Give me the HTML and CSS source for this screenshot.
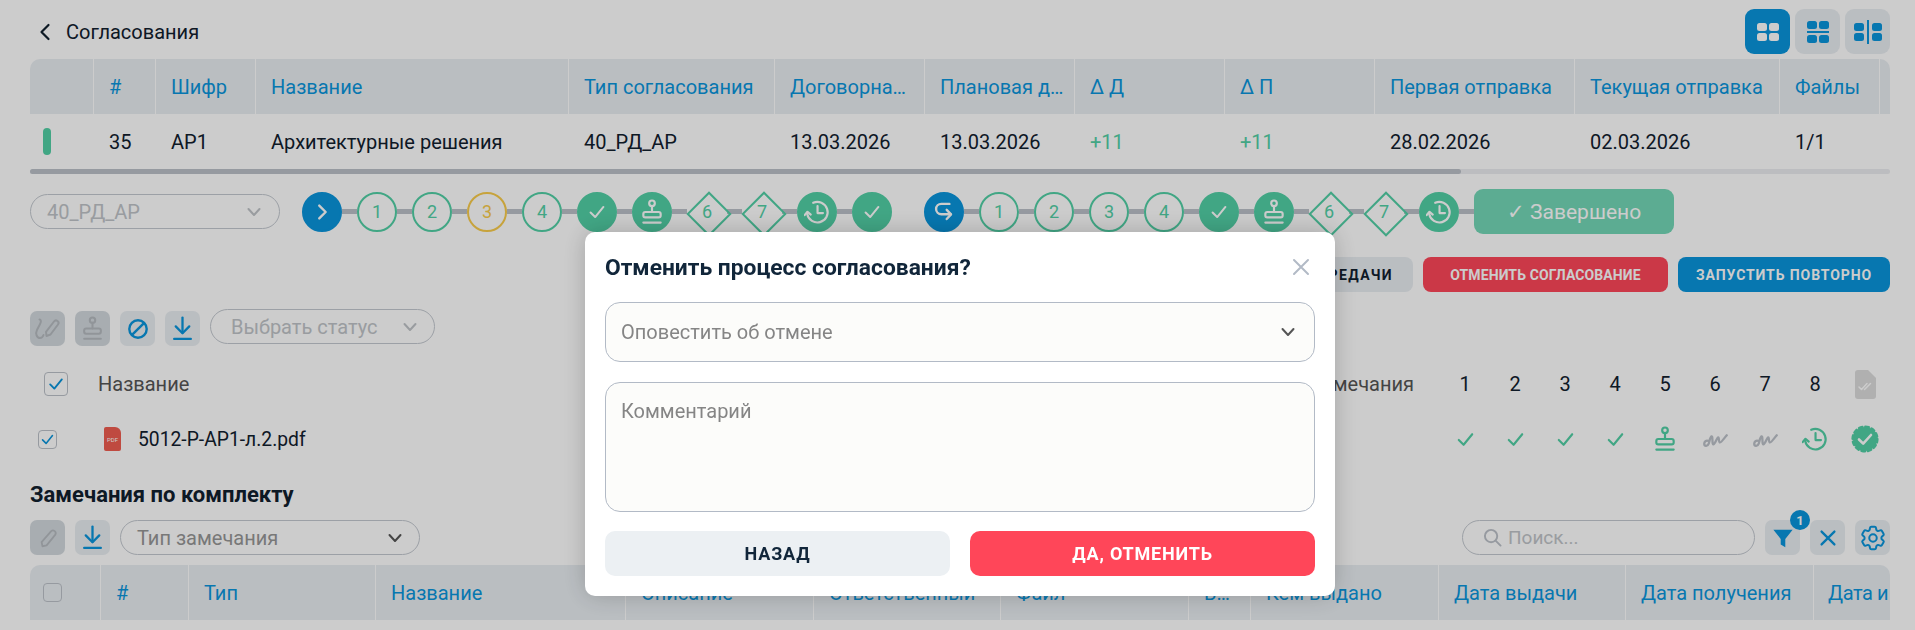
FILE: index.html
```html
<!DOCTYPE html>
<html lang="ru">
<head>
<meta charset="utf-8">
<title>Согласования</title>
<link rel="stylesheet" href="styles.css">
</head>
<body>
<svg class="sprite" aria-hidden="true">
  <symbol id="i-check" viewBox="0 0 24 24"><path d="M5 12.500l5 5 9-11" fill="none" stroke="currentColor" stroke-width="2.200" stroke-linecap="round" stroke-linejoin="round"/></symbol>
  <symbol id="i-stamp" viewBox="0 0 24 24"><g fill="none" stroke="currentColor" stroke-width="2" stroke-linecap="round" stroke-linejoin="round"><circle cx="12" cy="4" r="2.600"/><path d="M12 6.600v5.400"/><rect x="4" y="12" width="16" height="5" rx="1.800"/><path d="M4 21.800h16"/></g></symbol>
  <symbol id="i-history" viewBox="0 0 24 24"><g fill="none" stroke="currentColor" stroke-width="2" stroke-linecap="round" stroke-linejoin="round"><path d="M8.500 3.500A9.500 9.500 0 1 1 3 14"/><path d="M.6 14.800L3.200 11.800l3 2.600"/><path d="M12.500 6.500v6.500h5"/></g></symbol>
  <symbol id="i-back" viewBox="0 0 24 24"><g fill="none" stroke="currentColor" stroke-width="2.200" stroke-linecap="round" stroke-linejoin="round"><path d="M17 4.500H9.500a4.800 4.800 0 0 0 0 9.600H18"/><path d="M14.500 10l4 4.200-4 4.300"/></g></symbol>
  <symbol id="i-chev" viewBox="0 0 16 16"><path d="M2.500 5l5.500 6 5.500-6" fill="none" stroke="currentColor" stroke-width="2" stroke-linecap="round" stroke-linejoin="round"/></symbol>
  <symbol id="i-sign" viewBox="0 0 24 16"><path d="M5.500 9.500C3 8.500 1 10 1.200 12.500c.2 2.300 3.300 2.300 4.300-.5.800-2.300 1.300-6.500 2.700-7 1.200-.4.600 5.200 1.200 7 .5 1.400 1.600.5 3.200-3 1-2.300 1.900-3.700 2.400-2.500.5 1.300.1 3.800 1 4.300 1.300.7 3.800-3.500 6.800-6.800" fill="none" stroke="currentColor" stroke-width="2.200" stroke-linecap="round" stroke-linejoin="round"/></symbol>
  <symbol id="i-pencil" viewBox="0 0 24 24"><path d="M15.500 4.500a3 3 0 0 1 4.500 3.800L10.500 20 6 21l-1-4.500z" fill="none" stroke="currentColor" stroke-width="2" stroke-linejoin="round"/></symbol>
  <symbol id="i-signpen" viewBox="0 0 28 24"><g fill="none" stroke="currentColor" stroke-width="2" stroke-linecap="round" stroke-linejoin="round"><path d="M5.500 2.500C9 3 5 9 3 13c-2 4 0 8 3 8 2 0 3-1.500 3.500-3"/><path d="M20 4.500a2.500 2.500 0 0 1 4 3l-7.500 10-4 1.500-.5-4.200z"/></g></symbol>
  <symbol id="i-ban" viewBox="0 0 24 24"><g fill="none" stroke="currentColor" stroke-width="2.600"><circle cx="12" cy="12" r="9.500"/><path d="M5.500 18.500l13-13"/></g></symbol>
  <symbol id="i-down" viewBox="0 0 24 24"><g fill="none" stroke="currentColor" stroke-width="2.200" stroke-linecap="round" stroke-linejoin="round"><path d="M12 1.500V16"/><path d="M5.500 10l6.500 6.500 6.500-6.500"/><path d="M4 22h16"/></g></symbol>
  <symbol id="i-gear" viewBox="0 0 24 24"><g fill="none" stroke="currentColor" stroke-width="1.600"><path stroke-linejoin="round" d="M9.594 3.94c.09-.542.56-.94 1.11-.94h2.593c.55 0 1.02.398 1.11.94l.213 1.281c.063.374.313.686.645.87.074.04.147.083.22.127.325.196.72.257 1.075.124l1.217-.456a1.125 1.125 0 0 1 1.37.49l1.296 2.247a1.125 1.125 0 0 1-.26 1.431l-1.003.827c-.293.241-.438.613-.43.992a7.723 7.723 0 0 1 0 .255c-.008.378.137.75.43.991l1.004.827c.424.35.534.955.26 1.43l-1.298 2.247a1.125 1.125 0 0 1-1.369.491l-1.217-.456c-.355-.133-.75-.072-1.076.124a6.47 6.47 0 0 1-.22.128c-.331.183-.581.495-.644.869l-.213 1.281c-.09.543-.56.94-1.11.94h-2.594c-.55 0-1.019-.398-1.11-.94l-.213-1.281c-.062-.374-.312-.686-.644-.87a6.52 6.52 0 0 1-.22-.127c-.325-.196-.72-.257-1.076-.124l-1.217.456a1.125 1.125 0 0 1-1.369-.49l-1.297-2.247a1.125 1.125 0 0 1 .26-1.431l1.004-.827c.292-.24.437-.613.43-.991a6.932 6.932 0 0 1 0-.255c.007-.38-.138-.751-.43-.992l-1.004-.827a1.125 1.125 0 0 1-.26-1.43l1.297-2.247a1.125 1.125 0 0 1 1.37-.491l1.216.456c.356.133.751.072 1.076-.124.072-.044.146-.086.22-.128.332-.183.582-.495.644-.869l.214-1.28Z"/><circle cx="12" cy="12" r="3"/></g></symbol>
</svg>

<main class="page">
  <header class="topbar">
    <a class="back">
      <svg class="back-icon" viewBox="0 0 12 18"><path d="M9.500 2L2.500 9l7 7" fill="none" stroke="currentColor" stroke-width="2.200" stroke-linecap="round" stroke-linejoin="round"/></svg>
      <span>Согласования</span>
    </a>
    <div class="views">
      <button class="view view-on"><svg viewBox="0 0 24 24"><rect x="1" y="3" width="10" height="8" rx="2.500"/><rect x="13" y="3" width="10" height="8" rx="2.500"/><rect x="1" y="13" width="10" height="8" rx="2.500"/><rect x="13" y="13" width="10" height="8" rx="2.500"/></svg></button>
      <button class="view"><svg viewBox="0 0 24 24"><rect x="1" y="1" width="10" height="8" rx="2.500"/><rect x="13" y="1" width="10" height="8" rx="2.500"/><rect x="1" y="11" width="22" height="2"/><rect x="1" y="15" width="10" height="8" rx="2.500"/><rect x="13" y="15" width="10" height="8" rx="2.500"/></svg></button>
      <button class="view view-split"><svg viewBox="0 0 28 24"><rect x="0" y="3" width="10" height="8" rx="2.500"/><rect x="0" y="13" width="10" height="8" rx="2.500"/><rect x="13" y="0" width="2" height="24"/><rect x="18" y="3" width="10" height="8" rx="2.500"/><rect x="18" y="13" width="10" height="8" rx="2.500"/></svg></button>
    </div>
  </header>

  <section class="table table-one">
    <div class="thead">
      <div></div><div>#</div><div>Шифр</div><div>Название</div><div>Тип согласования</div><div>Договорна…</div><div>Плановая д…</div><div>Δ Д</div><div>Δ П</div><div>Первая отправка</div><div>Текущая отправка</div><div>Файлы</div><div></div>
    </div>
    <div class="trow">
      <div><span class="status-bar"></span></div><div>35</div><div>АР1</div><div>Архитектурные решения</div><div>40_РД_АР</div><div>13.03.2026</div><div>13.03.2026</div><div class="plus">+11</div><div class="plus">+11</div><div>28.02.2026</div><div>02.03.2026</div><div>1/1</div><div></div>
    </div>
    <div class="scrollbar"><div class="thumb"></div></div>
  </section>

  <section class="steps-row">
    <div class="pill pill-plan"><span>40_РД_АР</span><svg class="chev"><use href="#i-chev"/></svg></div>
    <div class="steps">
      <span class="node node-blue"><svg class="nicon" viewBox="0 0 24 24"><path d="M9 5l7 7-7 7" fill="none" stroke="currentColor" stroke-width="2.600" stroke-linecap="round" stroke-linejoin="round"/></svg></span><i class="link"></i>
      <span class="node">1</span><i class="link"></i>
      <span class="node">2</span><i class="link"></i>
      <span class="node node-yellow">3</span><i class="link"></i>
      <span class="node">4</span><i class="link"></i>
      <span class="node node-green"><svg class="nicon"><use href="#i-check"/></svg></span><i class="link"></i>
      <span class="node node-green"><svg class="nicon nicon-lg"><use href="#i-stamp"/></svg></span><i class="link"></i>
      <span class="node diamond"><b>6</b></span><i class="link"></i>
      <span class="node diamond"><b>7</b></span><i class="link"></i>
      <span class="node node-green"><svg class="nicon nicon-lg"><use href="#i-history"/></svg></span><i class="link"></i>
      <span class="node node-green"><svg class="nicon"><use href="#i-check"/></svg></span>
    </div>
    <div class="steps steps-second">
      <span class="node node-blue"><svg class="nicon nicon-lg"><use href="#i-back"/></svg></span><i class="link"></i>
      <span class="node">1</span><i class="link"></i>
      <span class="node">2</span><i class="link"></i>
      <span class="node">3</span><i class="link"></i>
      <span class="node">4</span><i class="link"></i>
      <span class="node node-green"><svg class="nicon"><use href="#i-check"/></svg></span><i class="link"></i>
      <span class="node node-green"><svg class="nicon nicon-lg"><use href="#i-stamp"/></svg></span><i class="link"></i>
      <span class="node diamond"><b>6</b></span><i class="link"></i>
      <span class="node diamond"><b>7</b></span><i class="link"></i>
      <span class="node node-green"><svg class="nicon nicon-lg"><use href="#i-history"/></svg></span><i class="link"></i>
    </div>
    <div class="done">✓ Завершено</div>
  </section>

  <section class="actions">
    <button class="act act-grey">ЛИСТ ПЕРЕДАЧИ</button>
    <button class="act act-red">ОТМЕНИТЬ СОГЛАСОВАНИЕ</button>
    <button class="act act-blue">ЗАПУСТИТЬ ПОВТОРНО</button>
  </section>

  <section class="tools tools-files">
    <button class="tool tool-off"><svg class="ticon ticon-wide"><use href="#i-signpen"/></svg></button>
    <button class="tool tool-off"><svg class="ticon ticon-tall"><use href="#i-stamp"/></svg></button>
    <button class="tool"><svg class="ticon"><use href="#i-ban"/></svg></button>
    <button class="tool"><svg class="ticon ticon-tall"><use href="#i-down"/></svg></button>
    <div class="pill pill-status"><span>Выбрать статус</span><svg class="chev"><use href="#i-chev"/></svg></div>
  </section>

  <section class="files">
    <div class="fhead">
      <span class="box box-lg"><svg viewBox="0 0 24 24"><use href="#i-check"/></svg></span>
      <span class="fname">Название</span>
      <span class="fremarks">Замечания</span>
      <div class="cells nums"><span>1</span><span>2</span><span>3</span><span>4</span><span>5</span><span>6</span><span>7</span><span>8</span>
        <span><svg class="doc" viewBox="0 0 21 29"><path d="M3 0h10l8 8v18a3 3 0 0 1-3 3H3a3 3 0 0 1-3-3V3a3 3 0 0 1 3-3z" fill="#dcdcdc"/><path d="M4 17l2.500 2.500L12 13.500M9.500 19.500l6-6" fill="none" stroke="#fff" stroke-width="1.500" stroke-linecap="round" stroke-linejoin="round"/></svg></span>
      </div>
    </div>
    <div class="frow">
      <span class="box box-sm"><svg viewBox="0 0 24 24"><use href="#i-check"/></svg></span>
      <span class="pdf">PDF</span>
      <span class="file-name">5012-Р-АР1-л.2.pdf</span>
      <div class="cells marks">
        <svg class="mk mk-ok"><use href="#i-check"/></svg>
        <svg class="mk mk-ok"><use href="#i-check"/></svg>
        <svg class="mk mk-ok"><use href="#i-check"/></svg>
        <svg class="mk mk-ok"><use href="#i-check"/></svg>
        <svg class="mk mk-stamp"><use href="#i-stamp"/></svg>
        <svg class="mk mk-sign"><use href="#i-sign"/></svg>
        <svg class="mk mk-sign"><use href="#i-sign"/></svg>
        <svg class="mk mk-stamp"><use href="#i-history"/></svg>
        <svg class="mk mk-badge" viewBox="0 0 28 28"><circle cx="14" cy="14" r="12" fill="currentColor"/><circle cx="14" cy="14" r="12.300" fill="none" stroke="currentColor" stroke-width="2.600" stroke-linecap="round" stroke-dasharray="3.400 3.040"/><path d="M8 14.500l4.200 4.200L20 10" fill="none" stroke="#fff" stroke-width="2.600" stroke-linecap="round" stroke-linejoin="round"/></svg>
      </div>
    </div>
  </section>

  <h2 class="section-title">Замечания по комплекту</h2>

  <section class="tools tools-notes">
    <button class="tool tool-off"><svg class="ticon"><use href="#i-pencil"/></svg></button>
    <button class="tool"><svg class="ticon ticon-tall"><use href="#i-down"/></svg></button>
    <div class="pill pill-type"><span>Тип замечания</span><svg class="chev"><use href="#i-chev"/></svg></div>
    <div class="push"></div>
    <div class="pill pill-search">
      <svg class="search" viewBox="0 0 20 20"><g fill="none" stroke="currentColor" stroke-width="2" stroke-linecap="round"><circle cx="8.500" cy="8.500" r="6.500"/><path d="M13.500 13.500l5 5"/></g></svg>
      <span>Поиск...</span>
    </div>
    <button class="tool tool-filter">
      <svg class="ticon" viewBox="0 0 24 24"><path d="M1.500 3h21l-8 10v9l-5-3v-6z" fill="currentColor"/></svg>
      <span class="badge">1</span>
    </button>
    <button class="tool"><svg class="ticon" viewBox="0 0 24 24"><path d="M5 5l14 14M19 5L5 19" fill="none" stroke="currentColor" stroke-width="2.500" stroke-linecap="round"/></svg></button>
    <button class="tool"><svg class="ticon ticon-gear"><use href="#i-gear"/></svg></button>
  </section>

  <section class="table table-two">
    <div class="thead">
      <div><span class="box box-plain"></span></div><div>#</div><div>Тип</div><div>Название</div><div>Описание</div><div>Ответственный</div><div>Файл</div><div>В…</div><div>Кем выдано</div><div>Дата выдачи</div><div>Дата получения</div><div class="th-last">Дата и</div>
    </div>
  </section>
</main>

<div class="overlay">
  <form class="modal">
    <div class="modal-head">
      <h1>Отменить процесс согласования?</h1>
      <svg class="close" viewBox="0 0 18 18"><path d="M2 2l14 14M16 2L2 16" fill="none" stroke="currentColor" stroke-width="2" stroke-linecap="round"/></svg>
    </div>
    <div class="field field-select"><span>Оповестить об отмене</span><svg class="chev"><use href="#i-chev"/></svg></div>
    <div class="field field-area"><span>Комментарий</span></div>
    <div class="modal-btns">
      <button type="button" class="mbtn mbtn-back">НАЗАД</button>
      <button type="button" class="mbtn mbtn-yes">ДА, ОТМЕНИТЬ</button>
    </div>
  </form>
</div>
</body>
</html>
```

FILE: styles.css
```css
* { box-sizing: border-box; }
html, body { margin: 0; height: 100%; overflow: hidden; background: #fff; }
body { font-family: Roboto, "Liberation Sans", sans-serif; font-size: 20px; color: #11202e; }
button { font: inherit; letter-spacing: inherit; border: 0; padding: 0; cursor: pointer; }
.sprite { display: none; }
.page { width: 1915px; height: 630px; padding: 9px 25px 0 30px; }

.topbar { display: flex; justify-content: space-between; align-items: flex-start; height: 45px; }
.back { display: flex; align-items: center; gap: 15px; height: 45px; padding-left: 9px; }
.back-icon { width: 12px; height: 18px; }
.views { display: flex; gap: 5px; }
.view { width: 45px; height: 45px; border-radius: 9px; background: #e9eef2; color: #0995dc; display: flex; align-items: center; justify-content: center; }
.view svg { width: 24px; height: 24px; fill: currentColor; }
.view-split svg { width: 28px; height: 24px; }
.view-on { background: #0995dc; color: #fff; }

.table { margin-top: 5px; overflow: hidden; }
.thead, .trow { display: grid; height: 55px; }
.thead { background: #e9eef2; color: #0995dc; border-radius: 10px 10px 0 0; }
.thead > div, .trow > div { display: flex; align-items: center; padding-left: 15px; white-space: nowrap; overflow: hidden; }
.thead > div { border-right: 1px solid #fff; }
.table-one .thead, .table-one .trow { grid-template-columns: 64px 62px 100px 313px 206px 150px 150px 150px 150px 200px 205px 100px 10px; }
.table-one .thead > div:last-child { border: 0; }
.status-bar { width: 8px; height: 27px; border-radius: 4px; background: #52d0a6; margin-left: -2px; }
.plus { color: #52d0a6; }
.scrollbar { height: 5px; background: #ecedf0; border-radius: 3px; }
.thumb { width: 1431px; height: 5px; background: #bcc1c9; border-radius: 3px; }

.steps-row { display: flex; align-items: center; height: 45px; margin-top: 15px; }
.pill { display: flex; align-items: center; justify-content: space-between; height: 35px; border: 1px solid #c4c9d0; border-radius: 18px; padding: 0 17px 0 16px; color: #c0c4c8; white-space: nowrap; }
.chev { width: 16px; height: 16px; color: #c0c4c8; flex: none; }
.pill-plan { width: 250px; }
.steps { display: flex; align-items: center; margin-left: 22px; }
.steps-second { margin-left: 32px; }
.node { position: relative; width: 40px; height: 40px; flex: none; display: flex; align-items: center; justify-content: center; border: 2px solid #52d0a6; border-radius: 50%; color: #52d0a6; font-size: 18px; }
.node-blue { background: #0995dc; border-color: #0995dc; color: #fff; }
.node-green { background: #52d0a6; color: #fff; }
.node-yellow { border-color: #f9cc4b; color: #f9cc4b; }
.nicon { width: 22px; height: 22px; }
.nicon-lg { width: 26px; height: 26px; }
.diamond { border: 0; border-radius: 0; }
.diamond::before { content: ""; position: absolute; left: 6px; top: 6px; width: 28px; height: 28px; border: 2px solid #52d0a6; transform: rotate(45deg); }
.diamond b { position: relative; font-weight: 400; }
.link { width: 15px; height: 5px; background: #bcc1c9; flex: none; }
.done { width: 200px; height: 45px; display: flex; align-items: center; justify-content: center; border-radius: 9px; background: #74d8b7; color: #fff; font-size: 21px; }

.actions { display: flex; justify-content: flex-end; gap: 10px; margin-top: 23px; }
.act { height: 35px; border-radius: 8px; font-weight: 700; font-size: 14px; white-space: nowrap; }
.act-grey { width: 213px; background: #e9eef2; color: #11202e; letter-spacing: 1.4px; text-align: right; padding-right: 20px; }
.act-red { width: 245px; background: #fe4659; color: #fff; letter-spacing: .1px; }
.act-blue { width: 212px; background: #0995dc; color: #fff; letter-spacing: .9px; }

.tools { display: flex; gap: 10px; }
.tools-files { margin-top: 17px; height: 37px; align-items: flex-end; }
.tool { position: relative; width: 35px; height: 35px; flex: none; border-radius: 7px; background: #e9eef2; color: #0995dc; display: flex; align-items: center; justify-content: center; }
.tool-off { background: #d3d9de; color: #b6bbc0; }
.ticon { width: 22px; height: 22px; }
.ticon-tall { width: 25px; height: 25px; }
.ticon-wide { width: 28px; height: 24px; }
.ticon-gear { width: 30px; height: 30px; }
.pill-status { width: 225px; align-self: flex-start; padding: 0 16px 0 20px; }
.pill-type { width: 300px; padding: 0 16px; color: #969696; }
.pill-type .chev { color: #555; }
.push { flex: 1; }
.pill-search { width: 293px; justify-content: flex-start; gap: 6px; padding-left: 20px; font-size: 19px; }
.search { width: 19px; height: 19px; color: #bcc1c9; }
.tool-filter { margin-left: 0; }
.badge { position: absolute; right: -10px; top: -10px; width: 20px; height: 20px; border-radius: 50%; background: #0995dc; color: #fff; font-size: 13px; font-weight: 700; display: flex; align-items: center; justify-content: center; }

.files { margin-top: 13px; }
.fhead, .frow { display: flex; align-items: center; }
.fhead { height: 50px; padding-left: 14px; color: #555; }
.frow { height: 60px; padding-left: 8px; }
.box { flex: none; display: flex; align-items: center; justify-content: center; background: #fff; border: 1px solid #bcc1c9; border-radius: 4px; color: #0995dc; }
.box-lg { width: 24px; height: 24px; }
.box-lg svg { width: 20px; height: 20px; }
.box-sm { width: 19px; height: 19px; }
.box-sm svg { width: 17px; height: 17px; }
.box-plain { width: 19px; height: 19px; background: transparent; margin-left: -2px; }
.fname { margin-left: 30px; flex: 1; }
.fremarks { margin-right: 26px; }
.cells { flex: none; display: grid; grid-template-columns: repeat(9, 50px); justify-items: center; align-items: center; }
.nums { color: #11202e; }
.doc { width: 21px; height: 29px; display: block; }
.pdf { width: 17px; height: 24px; margin-left: 47px; background: #ef5d50; border-radius: 2px 6px 2px 2px; color: #fff; font-size: 6px; display: flex; align-items: center; justify-content: center; }
.file-name { margin-left: 17px; flex: 1; font-size: 19.3px; }
.mk { width: 26px; height: 26px; }
.mk-ok { color: #52d0a6; width: 23px; height: 23px; }
.mk-stamp { color: #52d0a6; }
.mk-sign { color: #bcc1c9; width: 25px; height: 17px; }
.mk-badge { color: #52d0a6; width: 28px; height: 28px; }

.section-title { margin: 0; height: 50px; display: flex; align-items: center; font-size: 22px; font-weight: 700; }
.tools-notes { margin-top: 1px; }
.table-two { margin-top: 10px; }
.table-two .thead { grid-template-columns: 71px 88px 187px 250px 188px 187px 188px 62px 188px 187px 188px 76px; }
.table-two .thead > .th-last { border: 0; padding-left: 14px; letter-spacing: -.4px; }

.overlay { position: fixed; inset: 0; background: rgba(0, 0, 0, .2); }
.modal { position: absolute; left: 585px; top: 232px; width: 750px; height: 364px; padding: 0 20px; background: #fff; border-radius: 10px; box-shadow: 0 0 25px rgba(0, 0, 0, .2); }
.modal-head { display: flex; align-items: center; justify-content: space-between; height: 70px; padding-right: 5px; }
.modal-head h1 { margin: 0; font-size: 22.8px; font-weight: 700; color: #11263a; }
.close { width: 18px; height: 18px; color: #b2bac6; }
.field { border: 1px solid #b2bac6; border-radius: 15px; background: #fcfcfa; color: #858585; padding: 0 18px 0 15px; }
.field-select { height: 60px; display: flex; align-items: center; justify-content: space-between; }
.field-select .chev { color: #555; }
.field-area { height: 130px; margin-top: 20px; padding-top: 16px; }
.modal-btns { display: flex; gap: 20px; margin-top: 19px; }
.mbtn { flex: 1; height: 45px; border-radius: 10px; font-weight: 700; font-size: 18px; letter-spacing: .8px; }
.mbtn-back { background: #ecf0f3; color: #11263a; }
.mbtn-yes { background: #ff4659; color: #fff; }
```
